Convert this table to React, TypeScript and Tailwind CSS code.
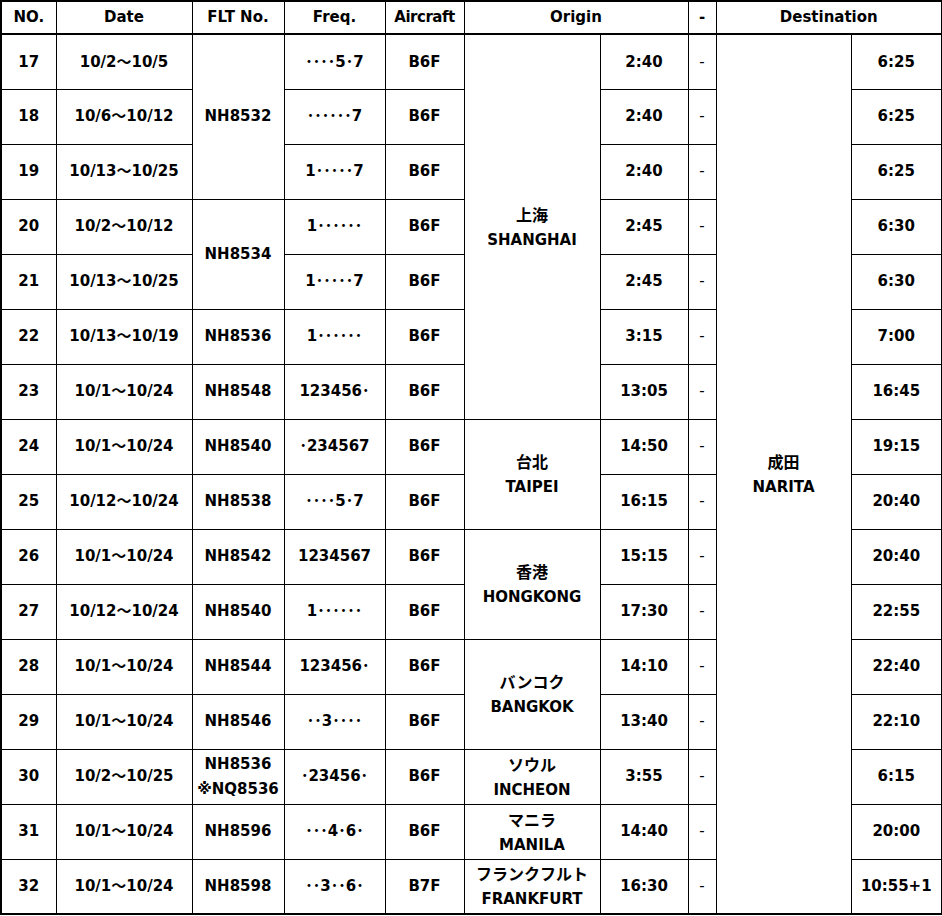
type Row = {
  no: number;
  date: string;
  flt?: { text: string[]; span: number };
  freq: string;
  aircraft: string;
  origin?: { jp: string; en: string; span: number };
  dep: string;
  dest?: { jp: string; en: string; span: number };
  arr: string;
};

const D = '･';

const rows: Row[] = [
  { no: 17, date: '10/2～10/5', flt: { text: ['NH8532'], span: 3 }, freq: `${D}${D}${D}${D}5${D}7`, aircraft: 'B6F', origin: { jp: '上海', en: 'SHANGHAI', span: 7 }, dep: '2:40', dest: { jp: '成田', en: 'NARITA', span: 16 }, arr: '6:25' },
  { no: 18, date: '10/6～10/12', freq: `${D}${D}${D}${D}${D}${D}7`, aircraft: 'B6F', dep: '2:40', arr: '6:25' },
  { no: 19, date: '10/13～10/25', freq: `1${D}${D}${D}${D}${D}7`, aircraft: 'B6F', dep: '2:40', arr: '6:25' },
  { no: 20, date: '10/2～10/12', flt: { text: ['NH8534'], span: 2 }, freq: `1${D}${D}${D}${D}${D}${D}`, aircraft: 'B6F', dep: '2:45', arr: '6:30' },
  { no: 21, date: '10/13～10/25', freq: `1${D}${D}${D}${D}${D}7`, aircraft: 'B6F', dep: '2:45', arr: '6:30' },
  { no: 22, date: '10/13～10/19', flt: { text: ['NH8536'], span: 1 }, freq: `1${D}${D}${D}${D}${D}${D}`, aircraft: 'B6F', dep: '3:15', arr: '7:00' },
  { no: 23, date: '10/1～10/24', flt: { text: ['NH8548'], span: 1 }, freq: `123456${D}`, aircraft: 'B6F', dep: '13:05', arr: '16:45' },
  { no: 24, date: '10/1～10/24', flt: { text: ['NH8540'], span: 1 }, freq: `${D}234567`, aircraft: 'B6F', origin: { jp: '台北', en: 'TAIPEI', span: 2 }, dep: '14:50', arr: '19:15' },
  { no: 25, date: '10/12～10/24', flt: { text: ['NH8538'], span: 1 }, freq: `${D}${D}${D}${D}5${D}7`, aircraft: 'B6F', dep: '16:15', arr: '20:40' },
  { no: 26, date: '10/1～10/24', flt: { text: ['NH8542'], span: 1 }, freq: '1234567', aircraft: 'B6F', origin: { jp: '香港', en: 'HONGKONG', span: 2 }, dep: '15:15', arr: '20:40' },
  { no: 27, date: '10/12～10/24', flt: { text: ['NH8540'], span: 1 }, freq: `1${D}${D}${D}${D}${D}${D}`, aircraft: 'B6F', dep: '17:30', arr: '22:55' },
  { no: 28, date: '10/1～10/24', flt: { text: ['NH8544'], span: 1 }, freq: `123456${D}`, aircraft: 'B6F', origin: { jp: 'バンコク', en: 'BANGKOK', span: 2 }, dep: '14:10', arr: '22:40' },
  { no: 29, date: '10/1～10/24', flt: { text: ['NH8546'], span: 1 }, freq: `${D}${D}3${D}${D}${D}${D}`, aircraft: 'B6F', dep: '13:40', arr: '22:10' },
  { no: 30, date: '10/2～10/25', flt: { text: ['NH8536', '※NQ8536'], span: 1 }, freq: `${D}23456${D}`, aircraft: 'B6F', origin: { jp: 'ソウル', en: 'INCHEON', span: 1 }, dep: '3:55', arr: '6:15' },
  { no: 31, date: '10/1～10/24', flt: { text: ['NH8596'], span: 1 }, freq: `${D}${D}${D}4${D}6${D}`, aircraft: 'B6F', origin: { jp: 'マニラ', en: 'MANILA', span: 1 }, dep: '14:40', arr: '20:00' },
  { no: 32, date: '10/1～10/24', flt: { text: ['NH8598'], span: 1 }, freq: `${D}${D}3${D}${D}6${D}`, aircraft: 'B7F', origin: { jp: 'フランクフルト', en: 'FRANKFURT', span: 1 }, dep: '16:30', arr: '10:55+1' },
];

const td = 'border border-black text-center align-middle p-0';

function Place({ jp, en }: { jp: string; en: string }) {
  return (
    <div className="flex flex-col items-center leading-[26px]">
      <span className="font-['Noto_Sans_CJK_JP',sans-serif] font-bold text-[16px]">{jp}</span>
      <span>{en}</span>
    </div>
  );
}

export default function App() {
  return (
    <div className="bg-white w-[942px] h-[916px]">
      <table className="table-fixed border-collapse border-2 border-black w-[941px] text-black font-['DejaVu_Sans','Noto_Sans_CJK_JP',sans-serif] font-bold text-[15px]">
        <colgroup>
          <col className="w-[55px]" />
          <col className="w-[136px]" />
          <col className="w-[92px]" />
          <col className="w-[101px]" />
          <col className="w-[79px]" />
          <col className="w-[136px]" />
          <col className="w-[88px]" />
          <col className="w-[28px]" />
          <col className="w-[135px]" />
          <col className="w-[91px]" />
        </colgroup>
        <thead>
          <tr className="h-[33px]">
            <th className={`${td} border-b-2`}>NO.</th>
            <th className={`${td} border-b-2`}>Date</th>
            <th className={`${td} border-b-2`}>FLT No.</th>
            <th className={`${td} border-b-2`}>Freq.</th>
            <th className={`${td} border-b-2 tracking-[-0.5px]`}>Aircraft</th>
            <th className={`${td} border-b-2`} colSpan={2}>Origin</th>
            <th className={`${td} border-b-2`}>-</th>
            <th className={`${td} border-b-2`} colSpan={2}>Destination</th>
          </tr>
        </thead>
        <tbody>
          {rows.map((r) => (
            <tr key={r.no} className="h-[55px]">
              <td className={td}>{r.no}</td>
              <td className={td}>{r.date}</td>
              {r.flt && (
                <td className={`${td} leading-[25px]`} rowSpan={r.flt.span}>
                  {r.flt.text.map((t) => (
                    <div key={t}>{t}</div>
                  ))}
                </td>
              )}
              <td className={td}>{r.freq}</td>
              <td className={td}>{r.aircraft}</td>
              {r.origin && (
                <td className={td} rowSpan={r.origin.span}>
                  <Place jp={r.origin.jp} en={r.origin.en} />
                </td>
              )}
              <td className={td}>{r.dep}</td>
              <td className={`${td} font-normal text-[15px]`}>-</td>
              {r.dest && (
                <td className={td} rowSpan={r.dest.span}>
                  <Place jp={r.dest.jp} en={r.dest.en} />
                </td>
              )}
              <td className={td}>{r.arr}</td>
            </tr>
          ))}
        </tbody>
      </table>
    </div>
  );
}
